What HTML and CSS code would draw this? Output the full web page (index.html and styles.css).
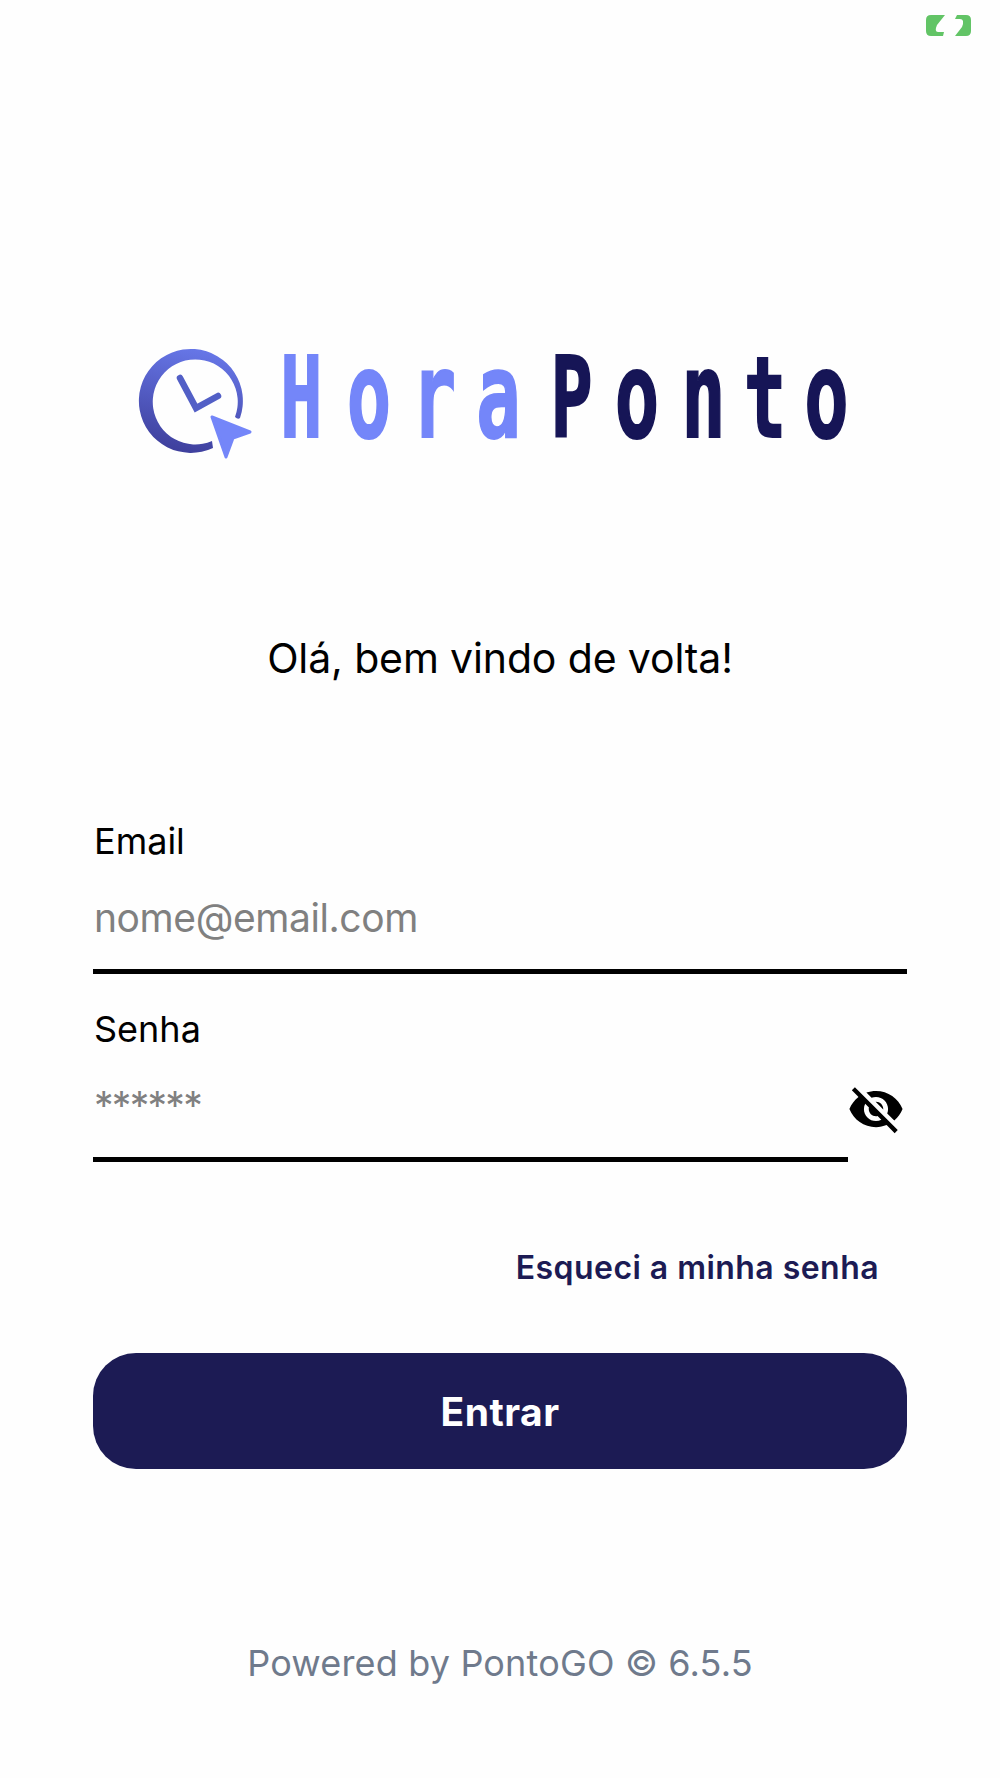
FILE: index.html
```
<!DOCTYPE html>
<html lang="pt-BR">
<head>
    <meta charset="UTF-8">
    <meta name="viewport" content="width=device-width, initial-scale=1.0">
    <title>HoraPonto</title>
    <link rel="stylesheet" href="styles.css">
</head>
<body>
    <div class="tela">
        <header class="barra-status">
            <svg class="bateria" viewBox="0 0 46 22">
                <path fill="#62c466" d="M5 0H19L11 10Q8 17 12 17H18L17 21H5Q0 21 0 16V5Q0 0 5 0Z"/>
                <path fill="#62c466" d="M31 0H40Q45 0 45 5V16Q45 21 40 21H29L36 12Q39 4 34 4H29Z"/>
            </svg>
        </header>

        <svg class="logo" viewBox="130 310 730 180" role="img" aria-label="HoraPonto">
            <defs>
                <linearGradient id="degrade" x1="0.6" y1="0" x2="0.4" y2="1">
                    <stop offset="0" stop-color="#6777e8"/>
                    <stop offset="1" stop-color="#3e3f9c"/>
                </linearGradient>
            </defs>
            <path fill="url(#degrade)" d="M240 418A52 52 0 1 0 213 448L212 441A42.5 42.5 0 1 1 235 417Q238 420 240 418Z"/>
            <path fill="none" stroke="#525fc6" stroke-width="6.5" stroke-linecap="round" d="M180 378L196 408L218 396"/>
            <path fill="#7486f9" stroke="#7486f9" stroke-width="3" stroke-linejoin="round" d="M212 417L250 432L233 438L226 457Z"/>
            <g class="nome" transform="scale(.62 1)">
                <text class="hora" x="486 595 700 804" y="437">H<tspan class="minuscula">ora</tspan></text>
                <text class="ponto" x="922 1027.5 1134.5 1234 1333" y="437">P<tspan class="minuscula">on</tspan>t<tspan class="minuscula">o</tspan></text>
            </g>
        </svg>

        <h1 class="saudacao">Olá, bem vindo de volta!</h1>

        <form class="form-login">
            <label for="email">Email</label>
            <input type="email" id="email" name="email" placeholder="nome@email.com">

            <label for="senha">Senha</label>
            <div class="linha-senha">
                <input type="password" id="senha" name="senha" placeholder="******">
                <svg class="olho" viewBox="0 0 24 24">
                    <path d="M12 7c2.76 0 5 2.24 5 5 0 .65-.13 1.26-.36 1.83l2.92 2.92c1.51-1.26 2.7-2.89 3.43-4.75-1.73-4.39-6-7.5-11-7.5-1.4 0-2.74.25-3.98.7l2.16 2.16C10.74 7.13 11.35 7 12 7zM2 4.27l2.28 2.28.46.46C3.08 8.3 1.78 10.02 1 12c1.73 4.39 6 7.5 11 7.5 1.55 0 3.03-.3 4.38-.84l.42.42L19.73 22 21 20.73 3.27 3 2 4.27zM7.53 9.8l1.55 1.55c-.05.21-.08.43-.08.65 0 1.66 1.34 3 3 3 .22 0 .44-.03.65-.08l1.55 1.55c-.67.33-1.41.53-2.2.53-2.76 0-5-2.24-5-5 0-.79.2-1.53.53-2.2zm4.31-.78l3.15 3.15.02-.16c0-1.66-1.34-3-3-3l-.17.01z"/>
                </svg>
            </div>

            <a class="esqueci">Esqueci a minha senha</a>
            <button type="button" class="entrar">Entrar</button>
        </form>

        <footer>Powered by PontoGO © 6.5.5</footer>
    </div>
</body>
</html>
```
FILE: styles.css
```
*{
    box-sizing: border-box;
}

body{
    margin: 0;
    background-color: #fefefe;
    font-family: Inter, "Liberation Sans", sans-serif;
    color: #000;
}

.tela{
    height: 1778px;
    padding: 0 93px;
    display: flex;
    flex-direction: column;
}

.barra-status{
    height: 310px;
    margin-right: -65px;
    padding-top: 15px;
    display: flex;
    justify-content: flex-end;
    align-items: flex-start;
}

.bateria{
    width: 46px;
    height: 22px;
}

.logo{
    width: 730px;
    height: 180px;
    margin-left: 37px;
}

.nome{
    font-family: "DejaVu Sans Mono", monospace;
    font-size: 113px;
    font-weight: bold;
    text-anchor: middle;
    stroke-width: 2px;
}

.nome .minuscula{
    font-size: 119px;
}

.hora{
    fill: #7486f9;
    stroke: #7486f9;
}

.ponto{
    fill: #161556;
    stroke: #161556;
}

.saudacao{
    margin: 138px 0 0;
    height: 60px;
    line-height: 60px;
    font-size: 41px;
    font-weight: 400;
    letter-spacing: -0.13px;
    text-align: center;
}

.form-login{
    margin-top: 129px;
    display: flex;
    flex-direction: column;
}

label{
    height: 48px;
    padding-left: 1px;
    line-height: 48px;
    font-size: 36px;
}

input{
    width: 100%;
    height: 109px;
    padding: 1px 0 0 1px;
    border: none;
    border-bottom: 5px solid #000;
    background: none;
    font-family: inherit;
    font-size: 39px;
    letter-spacing: -0.42px;
}

input::placeholder{
    color: #808080;
}

#email{
    margin-bottom: 31px;
}

.linha-senha{
    display: flex;
}

#senha{
    width: 755px;
    letter-spacing: -1.7px;
}

.olho{
    width: 58px;
    height: 58px;
    margin: 27px 0 0 -1px;
}

.esqueci{
    margin: 81px 28px 0 0;
    height: 50px;
    line-height: 50px;
    font-size: 32px;
    font-weight: 600;
    letter-spacing: 0.45px;
    text-align: right;
    color: #1c1b54;
}

.entrar{
    height: 116px;
    margin-top: 60px;
    border: none;
    border-radius: 43px;
    background-color: #1c1b54;
    color: #fff;
    font-family: inherit;
    font-size: 39px;
    font-weight: 700;
    letter-spacing: 0.5px;
}

footer{
    margin-top: 169px;
    height: 50px;
    line-height: 50px;
    font-size: 36px;
    letter-spacing: 0.17px;
    text-align: center;
    color: #6f7a8c;
}
```
